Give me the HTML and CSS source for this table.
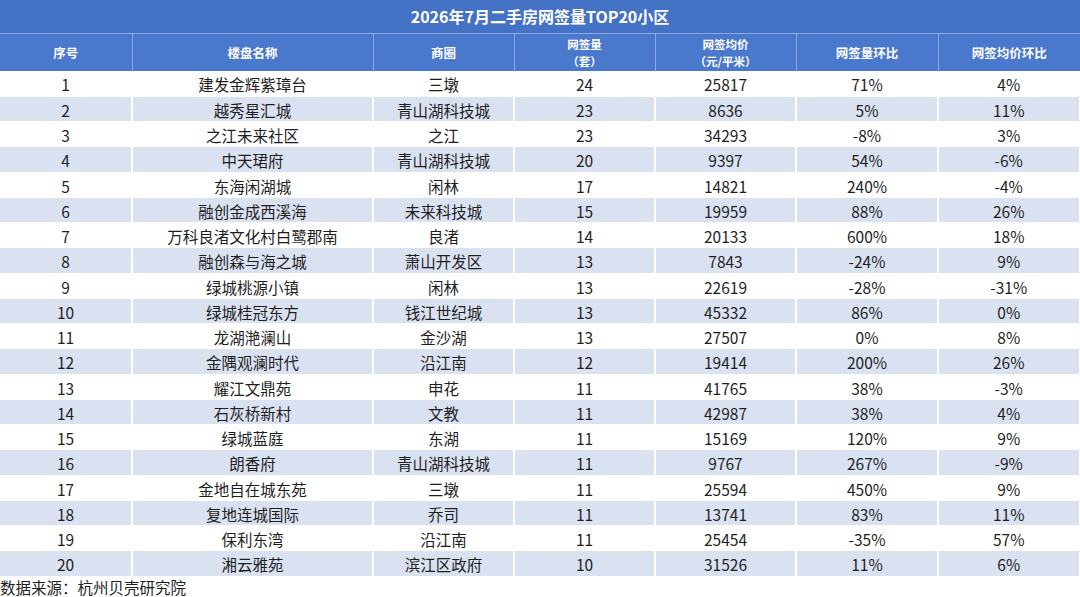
FILE: index.html
```html
<!DOCTYPE html>
<html lang="zh">
<head>
<meta charset="utf-8">
<title>2026年7月二手房网签量TOP20小区</title>
<link rel="stylesheet" href="styles.css">
</head>
<body>
<div class="page">
  <div class="title">2026年7月二手房网签量TOP20小区</div>
  <table class="data">
    <colgroup>
      <col class="c1"><col class="c2"><col class="c3"><col class="c4"><col class="c5"><col class="c6"><col class="c7">
    </colgroup>
    <thead>
      <tr>
        <th>序号</th>
        <th>楼盘名称</th>
        <th>商圈</th>
        <th><span class="two"><span class="ln">网签量</span><span class="ln">（套）</span></span></th>
        <th><span class="two"><span class="ln">网签均价</span><span class="ln">（元/平米）</span></span></th>
        <th>网签量环比</th>
        <th>网签均价环比</th>
      </tr>
    </thead>
    <tbody>
      <tr><td>1</td><td>建发金辉紫璋台</td><td>三墩</td><td>24</td><td>25817</td><td>71%</td><td>4%</td></tr>
      <tr><td>2</td><td>越秀星汇城</td><td>青山湖科技城</td><td>23</td><td>8636</td><td>5%</td><td>11%</td></tr>
      <tr><td>3</td><td>之江未来社区</td><td>之江</td><td>23</td><td>34293</td><td>-8%</td><td>3%</td></tr>
      <tr><td>4</td><td>中天珺府</td><td>青山湖科技城</td><td>20</td><td>9397</td><td>54%</td><td>-6%</td></tr>
      <tr><td>5</td><td>东海闲湖城</td><td>闲林</td><td>17</td><td>14821</td><td>240%</td><td>-4%</td></tr>
      <tr><td>6</td><td>融创金成西溪海</td><td>未来科技城</td><td>15</td><td>19959</td><td>88%</td><td>26%</td></tr>
      <tr><td>7</td><td>万科良渚文化村白鹭郡南</td><td>良渚</td><td>14</td><td>20133</td><td>600%</td><td>18%</td></tr>
      <tr><td>8</td><td>融创森与海之城</td><td>萧山开发区</td><td>13</td><td>7843</td><td>-24%</td><td>9%</td></tr>
      <tr><td>9</td><td>绿城桃源小镇</td><td>闲林</td><td>13</td><td>22619</td><td>-28%</td><td>-31%</td></tr>
      <tr><td>10</td><td>绿城桂冠东方</td><td>钱江世纪城</td><td>13</td><td>45332</td><td>86%</td><td>0%</td></tr>
      <tr><td>11</td><td>龙湖滟澜山</td><td>金沙湖</td><td>13</td><td>27507</td><td>0%</td><td>8%</td></tr>
      <tr><td>12</td><td>金隅观澜时代</td><td>沿江南</td><td>12</td><td>19414</td><td>200%</td><td>26%</td></tr>
      <tr><td>13</td><td>耀江文鼎苑</td><td>申花</td><td>11</td><td>41765</td><td>38%</td><td>-3%</td></tr>
      <tr><td>14</td><td>石灰桥新村</td><td>文教</td><td>11</td><td>42987</td><td>38%</td><td>4%</td></tr>
      <tr><td>15</td><td>绿城蓝庭</td><td>东湖</td><td>11</td><td>15169</td><td>120%</td><td>9%</td></tr>
      <tr><td>16</td><td>朗香府</td><td>青山湖科技城</td><td>11</td><td>9767</td><td>267%</td><td>-9%</td></tr>
      <tr><td>17</td><td>金地自在城东苑</td><td>三墩</td><td>11</td><td>25594</td><td>450%</td><td>9%</td></tr>
      <tr><td>18</td><td>复地连城国际</td><td>乔司</td><td>11</td><td>13741</td><td>83%</td><td>11%</td></tr>
      <tr><td>19</td><td>保利东湾</td><td>沿江南</td><td>11</td><td>25454</td><td>-35%</td><td>57%</td></tr>
      <tr><td>20</td><td>湘云雅苑</td><td>滨江区政府</td><td>10</td><td>31526</td><td>11%</td><td>6%</td></tr>
    </tbody>
  </table>
  <div class="source">数据来源：杭州贝壳研究院</div>
</div>
</body>
</html>
```

FILE: styles.css
```css
* { box-sizing: border-box; }
html, body { margin: 0; padding: 0; background: #ffffff; }
body {
  font-family: "Noto Sans CJK SC", "Noto Sans", sans-serif;
  color: #1e1e1e;
}
.page { width: 1080px; }
.title {
  height: 34px;
  background: #4472c4;
  border-bottom: 1px solid #8aa9e2;
  color: #ffffff;
  font-weight: 700;
  font-size: 16px;
  line-height: 33px;
  text-align: center;
}
.data {
  width: 1080px;
  border-collapse: collapse;
  table-layout: fixed;
}
.c1 { width: 132px; }
.c2 { width: 241px; }
.c3 { width: 141px; }
.c4 { width: 141px; }
.c5 { width: 141px; }
.c6 { width: 142px; }
.c7 { width: 142px; }
.data th {
  height: 37px;
  background: #4a78cc;
  color: #ffffff;
  font-weight: 700;
  font-size: 12.5px;
  line-height: 15px;
  text-align: center;
  vertical-align: middle;
  padding: 0;
  border-right: 1px solid #8aa9e2;
}
.data th:last-child { border-right: none; }
.two { display: flex; flex-direction: column; align-items: center; }
.ln { display: block; font-size: 11.5px; line-height: 16.5px; }
.data td {
  height: 25.25px;
  padding: 2px 0 0 0;
  text-align: center;
  vertical-align: middle;
  font-size: 15.5px;
  line-height: 20px;
  border-right: 2px solid #ffffff;
  border-bottom: 1px solid #ffffff;
}
.data td:last-child { border-right: 3px solid #ffffff; }
.data tbody tr:nth-child(even) td { background: #dae2f2; }
.source {
  font-size: 15.5px;
  line-height: 21px;
  color: #1e1e1e;
}
```
